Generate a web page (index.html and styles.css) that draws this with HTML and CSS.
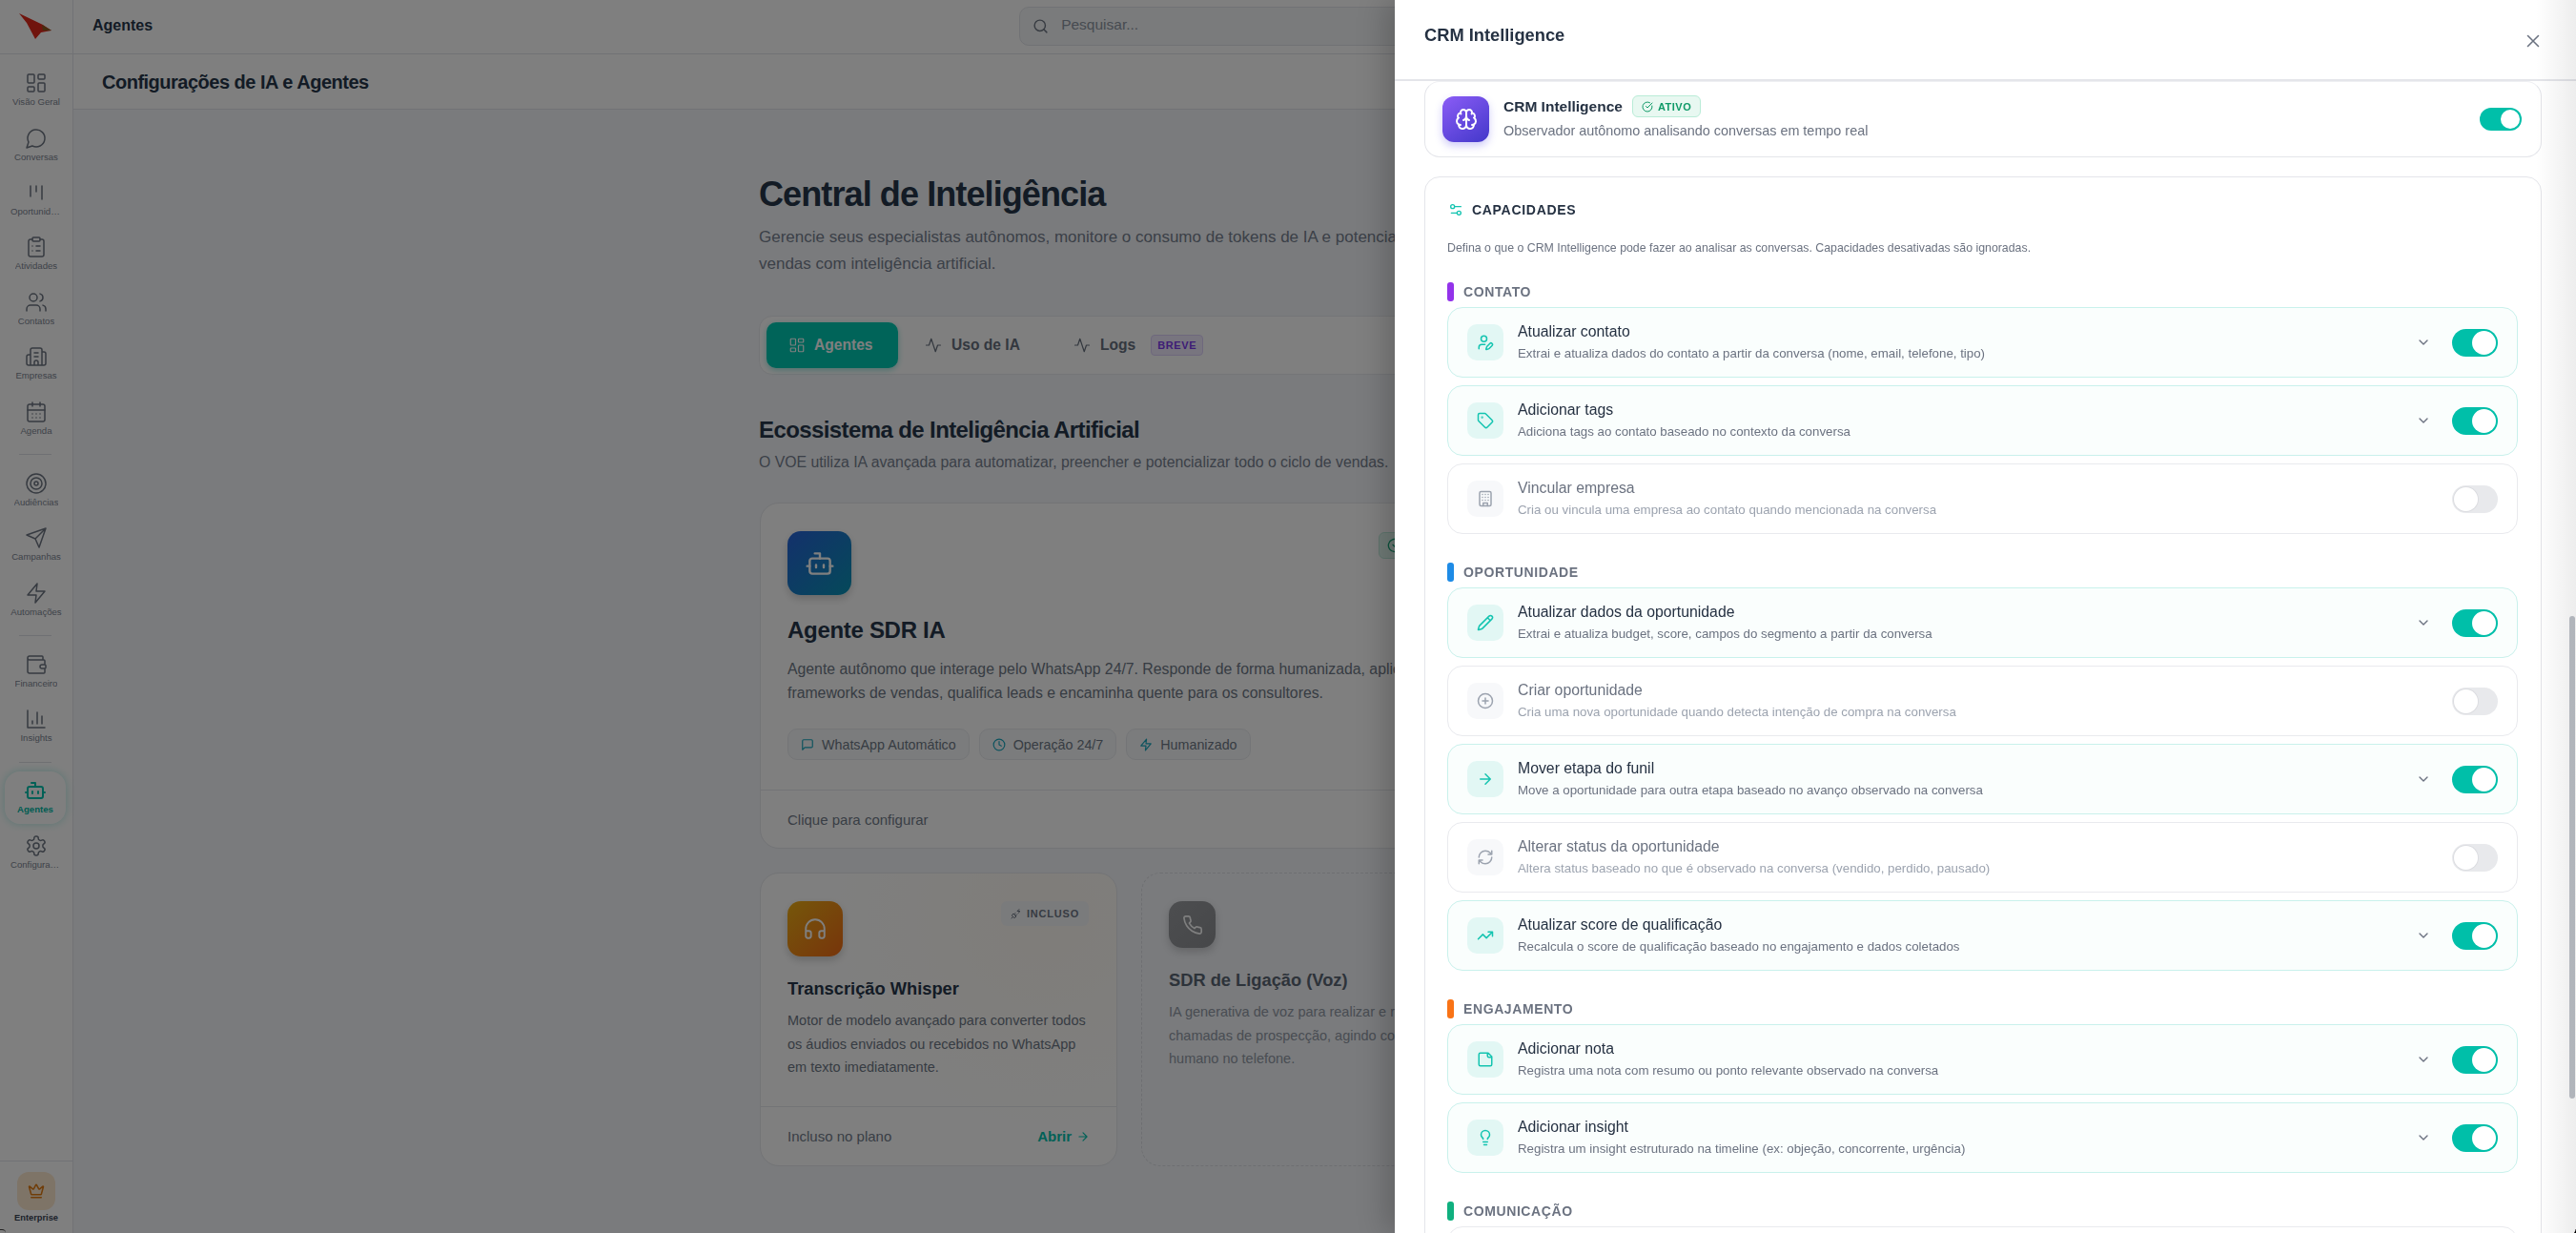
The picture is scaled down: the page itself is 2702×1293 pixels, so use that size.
FILE: index.html
```html
<!DOCTYPE html>
<html lang="pt-BR">
<head>
<meta charset="utf-8">
<title>Agentes</title>
<link rel="stylesheet" href="styles.css">
</head>
<body>
<svg class="defs" aria-hidden="true">
<symbol id="i-dash" viewBox="0 0 24 24"><rect x="3" y="3" width="7" height="9" rx="1"/><rect x="14" y="3" width="7" height="5" rx="1"/><rect x="14" y="12" width="7" height="9" rx="1"/><rect x="3" y="16" width="7" height="5" rx="1"/></symbol>
<symbol id="i-msg" viewBox="0 0 24 24"><path d="M7.9 20A9 9 0 1 0 4 16.1L2 22Z"/></symbol>
<symbol id="i-kanban" viewBox="0 0 24 24"><path d="M6 5v11M12 5v6M18 5v14"/></symbol>
<symbol id="i-clip" viewBox="0 0 24 24"><rect x="8" y="2" width="8" height="4" rx="1"/><path d="M16 4h2a2 2 0 0 1 2 2v14a2 2 0 0 1-2 2H6a2 2 0 0 1-2-2V6a2 2 0 0 1 2-2h2M12 11h4M12 16h4M8 11h.01M8 16h.01"/></symbol>
<symbol id="i-users" viewBox="0 0 24 24"><path d="M16 21v-2a4 4 0 0 0-4-4H6a4 4 0 0 0-4 4v2M22 21v-2a4 4 0 0 0-3-3.87M16 3.13a4 4 0 0 1 0 7.75"/><circle cx="9" cy="7" r="4"/></symbol>
<symbol id="i-build2" viewBox="0 0 24 24"><path d="M10 12h4M10 8h4M14 21v-3a2 2 0 0 0-4 0v3M6 10H4a2 2 0 0 0-2 2v7a2 2 0 0 0 2 2h16a2 2 0 0 0 2-2V9a2 2 0 0 0-2-2h-2M6 21V5a2 2 0 0 1 2-2h8a2 2 0 0 1 2 2v16"/></symbol>
<symbol id="i-cal" viewBox="0 0 24 24"><path d="M8 2v4M16 2v4M3 10h18M8 14h.01M12 14h.01M16 14h.01M8 18h.01M12 18h.01M16 18h.01"/><rect x="3" y="4" width="18" height="18" rx="2"/></symbol>
<symbol id="i-target" viewBox="0 0 24 24"><circle cx="12" cy="12" r="10"/><circle cx="12" cy="12" r="6"/><circle cx="12" cy="12" r="2"/></symbol>
<symbol id="i-send" viewBox="0 0 24 24"><path d="m22 2-7 20-4-9-9-4ZM22 2 11 13"/></symbol>
<symbol id="i-zap" viewBox="0 0 24 24"><path d="M13 2 3 14h9l-1 8 10-12h-9l1-8z"/></symbol>
<symbol id="i-wallet" viewBox="0 0 24 24"><path d="M19 7V4a1 1 0 0 0-1-1H5a2 2 0 0 0 0 4h15a1 1 0 0 1 1 1v4h-3a2 2 0 0 0 0 4h3a1 1 0 0 0 1-1v-2a1 1 0 0 0-1-1M3 5v14a2 2 0 0 0 2 2h15a1 1 0 0 0 1-1v-4"/></symbol>
<symbol id="i-chart" viewBox="0 0 24 24"><path d="M3 3v18h18M18 17V9M13 17V5M8 17v-3"/></symbol>
<symbol id="i-bot" viewBox="0 0 24 24"><path d="M12 8V4H8M2 14h2M20 14h2M15 13v2M9 13v2"/><rect x="4" y="8" width="16" height="12" rx="2"/></symbol>
<symbol id="i-gear" viewBox="0 0 24 24"><path d="M12.22 2h-.44a2 2 0 0 0-2 2v.18a2 2 0 0 1-1 1.73l-.43.25a2 2 0 0 1-2 0l-.15-.08a2 2 0 0 0-2.73.73l-.22.38a2 2 0 0 0 .73 2.73l.15.1a2 2 0 0 1 1 1.72v.51a2 2 0 0 1-1 1.74l-.15.09a2 2 0 0 0-.73 2.73l.22.38a2 2 0 0 0 2.73.73l.15-.08a2 2 0 0 1 2 0l.43.25a2 2 0 0 1 1 1.73V20a2 2 0 0 0 2 2h.44a2 2 0 0 0 2-2v-.18a2 2 0 0 1 1-1.73l.43-.25a2 2 0 0 1 2 0l.15.08a2 2 0 0 0 2.73-.73l.22-.39a2 2 0 0 0-.73-2.73l-.15-.08a2 2 0 0 1-1-1.74v-.5a2 2 0 0 1 1-1.74l.15-.09a2 2 0 0 0 .73-2.73l-.22-.38a2 2 0 0 0-2.73-.73l-.15.08a2 2 0 0 1-2 0l-.43-.25a2 2 0 0 1-1-1.73V4a2 2 0 0 0-2-2z"/><circle cx="12" cy="12" r="3"/></symbol>
<symbol id="i-crown" viewBox="0 0 24 24"><path d="M11.562 3.266a.5.5 0 0 1 .876 0L15.39 8.87a1 1 0 0 0 1.516.294L21.183 5.5a.5.5 0 0 1 .798.519l-2.834 10.246a1 1 0 0 1-.956.734H5.81a1 1 0 0 1-.957-.734L2.02 6.02a.5.5 0 0 1 .798-.519l4.276 3.664a1 1 0 0 0 1.516-.294zM5 21h14"/></symbol>
<symbol id="i-search" viewBox="0 0 24 24"><circle cx="11" cy="11" r="8"/><path d="m21 21-4.3-4.3"/></symbol>
<symbol id="i-activity" viewBox="0 0 24 24"><path d="M22 12h-4l-3 9L9 3l-3 9H2"/></symbol>
<symbol id="i-square" viewBox="0 0 24 24"><path d="M21 15a2 2 0 0 1-2 2H7l-4 4V5a2 2 0 0 1 2-2h14a2 2 0 0 1 2 2z"/></symbol>
<symbol id="i-clock" viewBox="0 0 24 24"><circle cx="12" cy="12" r="10"/><path d="M12 6v6l4 2"/></symbol>
<symbol id="i-head" viewBox="0 0 24 24"><path d="M3 14h3a2 2 0 0 1 2 2v3a2 2 0 0 1-2 2H5a2 2 0 0 1-2-2v-7a9 9 0 0 1 18 0v7a2 2 0 0 1-2 2h-1a2 2 0 0 1-2-2v-3a2 2 0 0 1 2-2h3"/></symbol>
<symbol id="i-phone" viewBox="0 0 24 24"><path d="M22 16.92v3a2 2 0 0 1-2.18 2 19.79 19.79 0 0 1-8.63-3.07 19.5 19.5 0 0 1-6-6 19.79 19.79 0 0 1-3.07-8.67A2 2 0 0 1 4.11 2h3a2 2 0 0 1 2 1.72 12.84 12.84 0 0 0 .7 2.81 2 2 0 0 1-.45 2.11L8.09 9.91a16 16 0 0 0 6 6l1.27-1.27a2 2 0 0 1 2.11-.45 12.84 12.84 0 0 0 2.81.7A2 2 0 0 1 22 16.92z"/></symbol>
<symbol id="i-arrow" viewBox="0 0 24 24"><path d="M5 12h14M12 5l7 7-7 7"/></symbol>
<symbol id="i-plug" viewBox="0 0 24 24"><path d="M6.3 20.3a2.4 2.4 0 0 0 3.4 0L12 18l-6-6-2.3 2.3a2.4 2.4 0 0 0 0 3.4ZM2 22l3-3M7.5 13.5 10 11M10.5 16.5 13 14M18 3l-4 4h6l-4 4"/></symbol>
<symbol id="i-brain" viewBox="0 0 24 24"><path d="M12 5a3 3 0 1 0-5.997.125 4 4 0 0 0-2.526 5.77 4 4 0 0 0 .556 6.588A4 4 0 1 0 12 18ZM12 5a3 3 0 1 1 5.997.125 4 4 0 0 1 2.526 5.77 4 4 0 0 1-.556 6.588A4 4 0 1 1 12 18ZM15 13a4.5 4.5 0 0 1-3-4 4.5 4.5 0 0 1-3 4M17.599 6.5a3 3 0 0 0 .399-1.375M6.003 5.125A3 3 0 0 0 6.401 6.5M3.477 10.896a4 4 0 0 1 .585-.396M19.938 10.5a4 4 0 0 1 .585.396M6 18a4 4 0 0 1-1.967-.516M19.967 17.484A4 4 0 0 1 18 18"/></symbol>
<symbol id="i-check" viewBox="0 0 24 24"><path d="M21.801 10A10 10 0 1 1 17 3.335M9 11l3 3L22 4"/></symbol>
<symbol id="i-sliders" viewBox="0 0 24 24"><path d="M20 7h-9M14 17H5"/><circle cx="17" cy="17" r="3"/><circle cx="7" cy="7" r="3"/></symbol>
<symbol id="i-userpen" viewBox="0 0 24 24"><path d="M11.5 15H7a4 4 0 0 0-4 4v2M21.378 16.626a1 1 0 0 0-3.004-3.004l-4.01 4.012a2 2 0 0 0-.506.854l-.837 2.87a.5.5 0 0 0 .62.62l2.87-.837a2 2 0 0 0 .854-.506z"/><circle cx="10" cy="7" r="4"/></symbol>
<symbol id="i-tag" viewBox="0 0 24 24"><path d="M12.586 2.586A2 2 0 0 0 11.172 2H4a2 2 0 0 0-2 2v7.172a2 2 0 0 0 .586 1.414l8.704 8.704a2.426 2.426 0 0 0 3.42 0l6.58-6.58a2.426 2.426 0 0 0 0-3.42z"/><circle cx="7.5" cy="7.5" r=".5"/></symbol>
<symbol id="i-building" viewBox="0 0 24 24"><rect x="4" y="2" width="16" height="20" rx="2"/><path d="M9 22v-4h6v4M8 6h.01M16 6h.01M12 6h.01M12 10h.01M12 14h.01M16 10h.01M16 14h.01M8 10h.01M8 14h.01"/></symbol>
<symbol id="i-pencil" viewBox="0 0 24 24"><path d="M21.174 6.812a1 1 0 0 0-3.986-3.987L3.842 16.174a2 2 0 0 0-.5.83l-1.321 4.352a.5.5 0 0 0 .623.622l4.353-1.32a2 2 0 0 0 .83-.497zM15 5l4 4"/></symbol>
<symbol id="i-plus" viewBox="0 0 24 24"><circle cx="12" cy="12" r="10"/><path d="M8 12h8M12 8v8"/></symbol>
<symbol id="i-refresh" viewBox="0 0 24 24"><path d="M3 12a9 9 0 0 1 9-9 9.75 9.75 0 0 1 6.74 2.74L21 8M21 3v5h-5M21 12a9 9 0 0 1-9 9 9.75 9.75 0 0 1-6.74-2.74L3 16M8 16H3v5"/></symbol>
<symbol id="i-trend" viewBox="0 0 24 24"><path d="M22 7 13.5 15.5 8.5 10.5 2 17M16 7h6v6"/></symbol>
<symbol id="i-note" viewBox="0 0 24 24"><path d="M16 3H5a2 2 0 0 0-2 2v14a2 2 0 0 0 2 2h14a2 2 0 0 0 2-2V8ZM15 3v4a2 2 0 0 0 2 2h4"/></symbol>
<symbol id="i-bulb" viewBox="0 0 24 24"><path d="M15 14c.2-1 .7-1.7 1.5-2.5 1-.9 1.5-2.2 1.5-3.5A6 6 0 0 0 6 8c0 1 .2 2.2 1.5 3.5.7.7 1.3 1.5 1.5 2.5M9 18h6M10 22h4"/></symbol>
<symbol id="i-chev" viewBox="0 0 24 24"><path d="m6 9 6 6 6-6"/></symbol>
<symbol id="i-x" viewBox="0 0 24 24"><path d="M18 6 6 18M6 6l12 12"/></symbol>
</svg>

<div class="app">
  <aside class="sidebar">
    <div class="logo">
      <svg class="logo-mark" viewBox="0 0 34 27"><path class="logo-red" d="M0 0 25 12 34 18 23 20 17 27 8 10Z"/><path class="logo-green" d="M24 12 34 18 25 18Z"/></svg>
    </div>
    <nav class="nav">
      <a class="nav-item"><svg class="ic-nav"><use href="#i-dash"/></svg><span class="nav-label">Visão Geral</span></a>
      <a class="nav-item"><svg class="ic-nav"><use href="#i-msg"/></svg><span class="nav-label">Conversas</span></a>
      <a class="nav-item"><svg class="ic-nav"><use href="#i-kanban"/></svg><span class="nav-label">Oportunidades</span></a>
      <a class="nav-item"><svg class="ic-nav"><use href="#i-clip"/></svg><span class="nav-label">Atividades</span></a>
      <a class="nav-item"><svg class="ic-nav"><use href="#i-users"/></svg><span class="nav-label">Contatos</span></a>
      <a class="nav-item"><svg class="ic-nav"><use href="#i-build2"/></svg><span class="nav-label">Empresas</span></a>
      <a class="nav-item"><svg class="ic-nav"><use href="#i-cal"/></svg><span class="nav-label">Agenda</span></a>
      <div class="nav-sep"></div>
      <a class="nav-item"><svg class="ic-nav"><use href="#i-target"/></svg><span class="nav-label">Audiências</span></a>
      <a class="nav-item"><svg class="ic-nav"><use href="#i-send"/></svg><span class="nav-label">Campanhas</span></a>
      <a class="nav-item"><svg class="ic-nav"><use href="#i-zap"/></svg><span class="nav-label">Automações</span></a>
      <div class="nav-sep"></div>
      <a class="nav-item"><svg class="ic-nav"><use href="#i-wallet"/></svg><span class="nav-label">Financeiro</span></a>
      <a class="nav-item"><svg class="ic-nav"><use href="#i-chart"/></svg><span class="nav-label">Insights</span></a>
      <div class="nav-sep"></div>
      <a class="nav-item is-active"><svg class="ic-nav"><use href="#i-bot"/></svg><span class="nav-label">Agentes</span></a>
      <a class="nav-item"><svg class="ic-nav"><use href="#i-gear"/></svg><span class="nav-label">Configurações</span></a>
    </nav>
    <div class="plan">
      <div class="plan-box"><svg class="ic-crown"><use href="#i-crown"/></svg></div>
      <span class="plan-label">Enterprise</span>
    </div>
  </aside>

  <main class="main">
    <header class="topbar">
      <span class="topbar-title">Agentes</span>
      <div class="search"><svg class="ic-search"><use href="#i-search"/></svg><span class="search-ph">Pesquisar...</span></div>
    </header>
    <div class="subhead"><h2 class="subhead-title">Configurações de IA e Agentes</h2></div>
    <div class="content">
      <h1 class="hero-title">Central de Inteligência</h1>
      <p class="hero-sub">Gerencie seus especialistas autônomos, monitore o consumo de tokens de IA e potencialize suas<br>vendas com inteligência artificial.</p>
      <div class="tabs">
        <div class="tab tab-on"><svg class="ic-tab"><use href="#i-dash"/></svg>Agentes</div>
        <div class="tab"><svg class="ic-tab"><use href="#i-activity"/></svg>Uso de IA</div>
        <div class="tab tab-logs"><svg class="ic-tab"><use href="#i-activity"/></svg>Logs<span class="soon">BREVE</span></div>
      </div>
      <h2 class="eco-title">Ecossistema de Inteligência Artificial</h2>
      <p class="eco-sub">O VOE utiliza IA avançada para automatizar, preencher e potencializar todo o ciclo de vendas.</p>

      <article class="card card-wide">
        <div class="card-body">
          <div class="avatar av-blue"><svg class="ic-av-lg"><use href="#i-bot"/></svg></div>
          <span class="on-badge"><svg class="ic-badge"><use href="#i-check"/></svg></span>
          <h3 class="sdr-title">Agente SDR IA</h3>
          <p class="sdr-desc">Agente autônomo que interage pelo WhatsApp 24/7. Responde de forma humanizada, aplica<br>frameworks de vendas, qualifica leads e encaminha quente para os consultores.</p>
          <div class="chips">
            <span class="chip"><svg class="ic-chip"><use href="#i-square"/></svg>WhatsApp Automático</span>
            <span class="chip"><svg class="ic-chip"><use href="#i-clock"/></svg>Operação 24/7</span>
            <span class="chip"><svg class="ic-chip"><use href="#i-zap"/></svg>Humanizado</span>
          </div>
        </div>
        <div class="card-foot card-foot-wide">Clique para configurar</div>
      </article>

      <div class="card-grid">
        <article class="card card-glow">
          <div class="card-body card-body-sm">
            <div class="avatar av-orange"><svg class="ic-av-md"><use href="#i-head"/></svg></div>
            <span class="inc-badge"><svg class="ic-inc"><use href="#i-plug"/></svg>INCLUSO</span>
            <h3 class="mod-title">Transcrição Whisper</h3>
            <p class="mod-desc">Motor de modelo avançado para converter todos<br>os áudios enviados ou recebidos no WhatsApp<br>em texto imediatamente.</p>
          </div>
          <div class="card-foot">Incluso no plano<span class="open">Abrir<svg class="ic-open"><use href="#i-arrow"/></svg></span></div>
        </article>
        <article class="card card-soon">
          <div class="card-body card-body-sm">
            <div class="avatar av-gray"><svg class="ic-av-sm"><use href="#i-phone"/></svg></div>
            <h3 class="mod-title mod-title-dim">SDR de Ligação (Voz)</h3>
            <p class="mod-desc mod-desc-dim">IA generativa de voz para realizar e receber<br>chamadas de prospecção, agindo como um<br>humano no telefone.</p>
          </div>
        </article>
        <article class="card card-soon card-third">
          <div class="card-body card-body-sm">
            <div class="avatar av-gray"></div>
            <span class="soon soon-card">EM BREVE</span>
          </div>
        </article>
      </div>
    </div>
  </main>
</div>

<div class="overlay"></div>

<aside class="panel">
  <header class="panel-head">
    <h2 class="panel-title">CRM Intelligence</h2>
    <svg class="ic-close"><use href="#i-x"/></svg>
  </header>
  <div class="panel-body">
    <section class="status">
      <div class="status-ic"><svg class="ic-brain"><use href="#i-brain"/></svg></div>
      <div class="status-text">
        <div class="status-line"><span class="status-name">CRM Intelligence</span><span class="ativo"><svg class="ic-ativo"><use href="#i-check"/></svg>ATIVO</span></div>
        <p class="status-sub">Observador autônomo analisando conversas em tempo real</p>
      </div>
      <span class="switch switch-sm"></span>
    </section>

    <section class="caps">
      <div class="caps-head"><svg class="ic-sliders"><use href="#i-sliders"/></svg><h3 class="caps-title">CAPACIDADES</h3></div>
      <p class="caps-desc">Defina o que o CRM Intelligence pode fazer ao analisar as conversas. Capacidades desativadas são ignoradas.</p>

      <h4 class="group group-purple">CONTATO</h4>
      <div class="rows">
        <div class="row"><span class="row-ic"><svg class="ic-row"><use href="#i-userpen"/></svg></span><div class="row-text"><div class="row-title">Atualizar contato</div><div class="row-desc">Extrai e atualiza dados do contato a partir da conversa (nome, email, telefone, tipo)</div></div><svg class="ic-chev"><use href="#i-chev"/></svg><span class="switch"></span></div>
        <div class="row"><span class="row-ic"><svg class="ic-row"><use href="#i-tag"/></svg></span><div class="row-text"><div class="row-title">Adicionar tags</div><div class="row-desc">Adiciona tags ao contato baseado no contexto da conversa</div></div><svg class="ic-chev"><use href="#i-chev"/></svg><span class="switch"></span></div>
        <div class="row row-off"><span class="row-ic"><svg class="ic-row"><use href="#i-building"/></svg></span><div class="row-text"><div class="row-title">Vincular empresa</div><div class="row-desc">Cria ou vincula uma empresa ao contato quando mencionada na conversa</div></div><span class="switch switch-off"></span></div>
      </div>

      <h4 class="group group-blue">OPORTUNIDADE</h4>
      <div class="rows">
        <div class="row"><span class="row-ic"><svg class="ic-row"><use href="#i-pencil"/></svg></span><div class="row-text"><div class="row-title">Atualizar dados da oportunidade</div><div class="row-desc">Extrai e atualiza budget, score, campos do segmento a partir da conversa</div></div><svg class="ic-chev"><use href="#i-chev"/></svg><span class="switch"></span></div>
        <div class="row row-off"><span class="row-ic"><svg class="ic-row"><use href="#i-plus"/></svg></span><div class="row-text"><div class="row-title">Criar oportunidade</div><div class="row-desc">Cria uma nova oportunidade quando detecta intenção de compra na conversa</div></div><span class="switch switch-off"></span></div>
        <div class="row"><span class="row-ic"><svg class="ic-row"><use href="#i-arrow"/></svg></span><div class="row-text"><div class="row-title">Mover etapa do funil</div><div class="row-desc">Move a oportunidade para outra etapa baseado no avanço observado na conversa</div></div><svg class="ic-chev"><use href="#i-chev"/></svg><span class="switch"></span></div>
        <div class="row row-off"><span class="row-ic"><svg class="ic-row"><use href="#i-refresh"/></svg></span><div class="row-text"><div class="row-title">Alterar status da oportunidade</div><div class="row-desc">Altera status baseado no que é observado na conversa (vendido, perdido, pausado)</div></div><span class="switch switch-off"></span></div>
        <div class="row"><span class="row-ic"><svg class="ic-row"><use href="#i-trend"/></svg></span><div class="row-text"><div class="row-title">Atualizar score de qualificação</div><div class="row-desc">Recalcula o score de qualificação baseado no engajamento e dados coletados</div></div><svg class="ic-chev"><use href="#i-chev"/></svg><span class="switch"></span></div>
      </div>

      <h4 class="group group-orange">ENGAJAMENTO</h4>
      <div class="rows">
        <div class="row"><span class="row-ic"><svg class="ic-row"><use href="#i-note"/></svg></span><div class="row-text"><div class="row-title">Adicionar nota</div><div class="row-desc">Registra uma nota com resumo ou ponto relevante observado na conversa</div></div><svg class="ic-chev"><use href="#i-chev"/></svg><span class="switch"></span></div>
        <div class="row"><span class="row-ic"><svg class="ic-row"><use href="#i-bulb"/></svg></span><div class="row-text"><div class="row-title">Adicionar insight</div><div class="row-desc">Registra um insight estruturado na timeline (ex: objeção, concorrente, urgência)</div></div><svg class="ic-chev"><use href="#i-chev"/></svg><span class="switch"></span></div>
      </div>

      <h4 class="group group-green">COMUNICAÇÃO</h4>
      <div class="rows"><div class="row row-off row-empty"></div></div>
    </section>
  </div>
  <span class="thumb"></span>
</aside>
<span class="corner corner-l"></span>
<span class="corner corner-r"></span>
</body>
</html>
```

FILE: styles.css
```css
* { box-sizing: border-box; margin: 0; padding: 0; }
html, body { width: 2702px; height: 1293px; overflow: hidden; }
body { font-family: "Liberation Sans", Arial, sans-serif; color: #26364a; background: #f4f6fa; }
.defs { width: 0; height: 0; position: absolute; }
svg { fill: none; stroke: currentColor; stroke-linecap: round; stroke-linejoin: round; stroke-width: 2; display: block; flex: none; }

.app { display: flex; height: 1293px; }

/* sidebar */
.sidebar { width: 77px; flex: none; background: #fff; border-right: 1px solid #e3e5ea; display: flex; flex-direction: column; }
.logo { height: 57px; flex: none; border-bottom: 1px solid #e3e5ea; padding: 14px 0 0 20px; }
.logo-mark { width: 34px; height: 27px; stroke: none; }
.logo-red { fill: #e0281a; }
.logo-green { fill: #8a5a20; }
.nav { flex: 1; padding-top: 9px; display: flex; flex-direction: column; }
.nav-item { height: 57.4px; flex: none; display: flex; flex-direction: column; align-items: center; justify-content: center; gap: 1px; }
.ic-nav { width: 24px; height: 24px; stroke-width: 1.5; color: #6e7683; }
.nav-label { font-size: 9.6px; line-height: 14px; max-width: 54px; white-space: nowrap; overflow: hidden; text-overflow: ellipsis; color: #7c8592; }
.nav-sep { height: 1px; width: 34px; margin: 8.5px 20px 8.5px; background: #dfe1e6; flex: none; }
.nav-item.is-active { height: 55px; margin: 0 7px 2.4px 5px; background: #fff; border-radius: 16px; box-shadow: 0 0 10px rgba(0, 190, 170, .3); }
.is-active .ic-nav { color: #00c2ae; stroke-width: 2; }
.is-active .nav-label { color: #00b8a4; font-weight: 700; }
.plan { height: 76px; flex: none; border-top: 1px solid #e3e5ea; display: flex; flex-direction: column; align-items: center; padding-top: 11px; }
.plan-box { width: 40px; height: 40px; border-radius: 12px; background: #fde8cf; display: flex; align-items: center; justify-content: center; }
.ic-crown { width: 18px; height: 18px; color: #e07a10; }
.plan-label { font-size: 9.3px; font-weight: 700; line-height: 14px; margin-top: 1px; color: #3a4555; }

/* main */
.main { flex: 1; min-width: 0; display: flex; flex-direction: column; }
.topbar { height: 57px; flex: none; background: #fff; border-bottom: 1px solid #e3e5ea; display: flex; align-items: center; padding: 0 20px; position: relative; }
.topbar-title { font-size: 16px; font-weight: 700; line-height: 20px; margin-bottom: 3px; }
.search { width: 600px; height: 41px; margin-left: 909px; margin-bottom: 1px; background: #f4f6f8; border: 1px solid #e3e5ea; border-radius: 10px; display: flex; align-items: center; padding-left: 13px; gap: 13px; }
.ic-search { width: 17px; height: 17px; color: #6e7683; }
.search-ph { font-size: 15.5px; color: #8e96a3; margin-bottom: 3px; }
.subhead { height: 58px; flex: none; background: #fff; border-bottom: 1px solid #e3e5ea; padding: 0 30px; display: flex; align-items: center; }
.subhead-title { font-size: 20px; font-weight: 700; line-height: 28px; letter-spacing: -.5px; }
.content { width: 1186px; margin-left: 719px; padding-top: 67px; }

.hero-title { font-size: 36px; font-weight: 700; line-height: 44px; letter-spacing: -.9px; }
.hero-sub { font-size: 17px; line-height: 28px; margin-top: 9px; color: #778190; white-space: nowrap; }
.tabs { height: 62px; margin-top: 40px; background: #fff; border: 1px solid #e9ebef; border-radius: 14px; display: flex; align-items: center; padding: 0 7px; }
.tab { display: flex; align-items: center; gap: 10px; height: 48px; font-size: 15.6px; font-weight: 700; color: #67707e; padding: 0 28px; }
.tab-on { width: 138px; gap: 9px; background: #00c8b2; color: #fff; border-radius: 10px; box-shadow: 0 2px 6px rgba(0, 190, 170, .4); padding: 0 0 0 23px; }
.ic-tab { width: 18px; height: 18px; stroke-width: 1.6; }
.soon { font-size: 11px; font-weight: 700; letter-spacing: .6px; color: #7c3aed; background: #f1ebfe; border: 1px solid #ddd0fa; border-radius: 4px; line-height: 20px; padding: 0 6px; margin-left: 6px; }
.eco-title { font-size: 24px; font-weight: 700; line-height: 32px; margin-top: 42px; letter-spacing: -.6px; }
.eco-sub { font-size: 15.8px; line-height: 24px; margin-top: 6px; color: #778190; white-space: nowrap; }

/* agent cards */
.card { background: #fff; border: 1px solid #e6e8ec; border-radius: 20px; position: relative; overflow: hidden; }
.card-wide { margin-top: 30px; height: 363px; display: flex; flex-direction: column; margin-left: 1px; }
.card-body { padding: 29px 28px 0; flex: 1; position: relative; }
.avatar { border-radius: 14px; display: flex; align-items: center; justify-content: center; color: #fff; box-shadow: 0 4px 8px rgba(0, 0, 0, .18); }
.av-blue { width: 67px; height: 67px; background: linear-gradient(135deg, #2762d8, #0a93b4); }
.av-orange { width: 58px; height: 58px; background: linear-gradient(135deg, #ecae15, #ef6a17); }
.av-gray { width: 49px; height: 49px; background: linear-gradient(135deg, #9a9ca0, #8d8f93); }
.ic-av-lg { width: 32px; height: 32px; stroke-width: 1.8; }
.ic-av-md { width: 26px; height: 26px; stroke-width: 1.8; }
.ic-av-sm { width: 22px; height: 22px; stroke-width: 1.8; }
.on-badge { position: absolute; top: 30px; left: 648px; width: 90px; height: 28px; background: #e0f7ee; border: 1px solid #bfeadb; border-radius: 6px; padding: 5px 8px; color: #18a77a; }
.ic-badge { width: 16px; height: 16px; }
.sdr-title { font-size: 24px; font-weight: 700; line-height: 34px; margin-top: 20px; letter-spacing: -.3px; }
.sdr-desc { font-size: 15.8px; line-height: 25px; margin-top: 11px; color: #6e7886; white-space: nowrap; }
.chips { display: flex; gap: 10px; margin-top: 25px; }
.chip { height: 33px; display: flex; align-items: center; gap: 8px; padding: 0 13px; font-size: 14.3px; color: #6e7886; background: #f7f8fa; border: 1px solid #e9ebef; border-radius: 10px; }
.ic-chip { width: 14px; height: 14px; color: #18a6bd; }
.card-foot { height: 62px; flex: none; border-top: 1px solid #e6e8ec; padding: 0 28px; display: flex; align-items: center; justify-content: space-between; font-size: 15px; color: #737d8b; }
.card-foot-wide { height: 61px; }
.card-grid { display: grid; grid-template-columns: 375px 375px 375px; gap: 26px 25px; margin-top: 25px; margin-left: 1px; }
.card-grid .card { height: 308px; display: flex; flex-direction: column; }
.card-glow { background: radial-gradient(circle at 80% 15%, #fffaf3, #fff 60%); }
.card-soon { background: transparent; border: 1px dashed #dcdfe4; }
.card-body-sm { padding-top: 29px; }
.inc-badge { position: absolute; top: 29px; right: 29px; height: 26px; display: flex; align-items: center; gap: 5px; padding: 0 10px; font-size: 11px; font-weight: 700; letter-spacing: .8px; color: #6e7886; background: #f5f6f8; border-radius: 6px; }
.ic-inc { width: 12px; height: 12px; }
.mod-title { font-size: 18.3px; font-weight: 700; line-height: 26px; margin-top: 21px; }
.mod-title-dim { color: #5b6675; }
.mod-desc { font-size: 14.5px; line-height: 24.5px; margin-top: 8px; color: #6e7886; white-space: nowrap; }
.mod-desc-dim { color: #929aa6; }
.open { display: flex; align-items: center; gap: 5px; font-weight: 700; color: #00c2ae; font-size: 15px; }
.ic-open { width: 14px; height: 14px; }
.soon-card { position: absolute; top: 29px; right: 29px; margin: 0; }

/* dimmer */
.overlay { position: fixed; inset: 0; background: rgba(0, 0, 0, .5); backdrop-filter: blur(.6px); }

/* drawer */
.panel { position: fixed; top: 0; right: 0; bottom: 0; width: 1239px; background: #fff; box-shadow: -8px 0 30px rgba(0, 0, 0, .22); display: flex; flex-direction: column; overflow: hidden; }
.panel::after { content: ""; position: absolute; top: 0; right: 0; bottom: 0; width: 42px; background: linear-gradient(90deg, rgba(0, 0, 0, 0), rgba(0, 0, 0, .07)); pointer-events: none; }
.panel-head { height: 85px; flex: none; border-bottom: 2px solid #e4e5ea; display: flex; justify-content: space-between; padding: 24px 34px 0 31px; }
.panel-title { font-size: 18.3px; font-weight: 700; line-height: 26px; color: #253142; }
.ic-close { width: 22px; height: 22px; margin-top: 8px; color: #6b7280; stroke-width: 1.7; }
.panel-body { flex: 1; min-height: 0; padding: 0 36px 0 31px; overflow: hidden; }

.status { height: 80px; border: 1px solid #e4e5ea; border-top-color: #eeeff2; border-radius: 16px; display: flex; align-items: center; padding: 0 20px 0 18px; }
.status-ic { width: 49px; height: 48px; border-radius: 12px; background: linear-gradient(145deg, #8b5cf6, #4338ca); color: #fff; display: flex; align-items: center; justify-content: center; box-shadow: 0 4px 8px rgba(79, 70, 229, .28); }
.ic-brain { width: 24px; height: 24px; }
.status-text { flex: 1; margin-left: 15px; }
.status-line { display: flex; align-items: center; gap: 10px; height: 24px; margin-top: -4px; }
.status-name { font-size: 15.5px; font-weight: 700; color: #253142; }
.ativo { height: 23px; display: flex; align-items: center; gap: 5px; padding: 0 9px; font-size: 11px; font-weight: 700; letter-spacing: .5px; color: #0f9a68; background: #e8f8f1; border: 1px solid #b9ecd7; border-radius: 6px; }
.ic-ativo { width: 12px; height: 12px; }
.status-sub { font-size: 14.4px; line-height: 20px; margin-top: 3px; color: #6b7280; }

.switch { width: 48px; height: 29px; border-radius: 15px; background: #00bfa9; flex: none; display: flex; justify-content: flex-end; align-items: center; padding: 2px; }
.switch::after { content: ""; width: 25px; height: 25px; border-radius: 50%; background: #fff; }
.switch-sm { width: 44px; height: 24px; }
.switch-sm::after { width: 20px; height: 20px; }
.switch-off { background: #e8e9ec; justify-content: flex-start; }
.switch-off::after { box-shadow: 0 0 0 1px #dcdde1; }

.caps { margin-top: 20px; border: 1px solid #e4e5ea; border-radius: 16px; padding: 24px 24px 0 23px; min-height: 1200px; }
.caps-head { display: flex; align-items: center; gap: 9px; height: 20px; }
.ic-sliders { width: 16px; height: 16px; color: #14c4b0; margin-left: 1px; }
.caps-title { font-size: 14px; font-weight: 700; letter-spacing: .7px; color: #253142; }
.caps-desc { font-size: 12.35px; line-height: 18px; margin-top: 21px; color: #6b7280; }
.group { display: flex; align-items: center; gap: 10px; height: 20px; margin-top: 30px; font-size: 14px; font-weight: 700; letter-spacing: .6px; color: #6b7280; }
.caps-desc + .group { margin-top: 27px; }
.group::before { content: ""; width: 7px; height: 20px; border-radius: 3px; flex: none; }
.group-purple::before { background: #9333ea; }
.group-blue::before { background: #1e8be6; }
.group-orange::before { background: #f97316; }
.group-green::before { background: #10b07f; }
.rows { margin-top: 6px; display: flex; flex-direction: column; gap: 8px; }
.row { height: 74px; border: 1px solid #c9f1ec; border-radius: 16px; background: #fafefd; display: flex; align-items: center; padding: 0 20px; }
.row-off { background: #fff; border-color: #e9eaee; }
.row-empty { flex: none; }
.row-ic { width: 38px; height: 38px; border-radius: 10px; background: #e2f7f4; color: #14c4b0; display: flex; align-items: center; justify-content: center; flex: none; }
.row-off .row-ic { background: #f7f8fa; color: #9ca3af; }
.ic-row { width: 18px; height: 18px; }
.row-text { flex: 1; margin-left: 15px; }
.row-title { font-size: 15.8px; line-height: 20px; color: #253142; }
.row-off .row-title { color: #6b7280; }
.row-desc { font-size: 13.3px; line-height: 18px; margin-top: 4px; color: #6b7280; }
.row-off .row-desc { color: #9ca3af; }
.ic-chev { width: 16px; height: 16px; color: #6b7280; margin-right: 22px; }

.thumb { position: absolute; top: 646px; right: 1px; width: 6px; height: 506px; border-radius: 3px; background: #bdc1c8; }
.corner { position: fixed; bottom: 0; width: 6px; height: 4px; }
.corner-l { left: 0; border-top-right-radius: 6px; border-top: 1px solid #222; }
.corner-r { right: 0; background: radial-gradient(circle at 0 0, transparent 5px, #000 6px); }
```
